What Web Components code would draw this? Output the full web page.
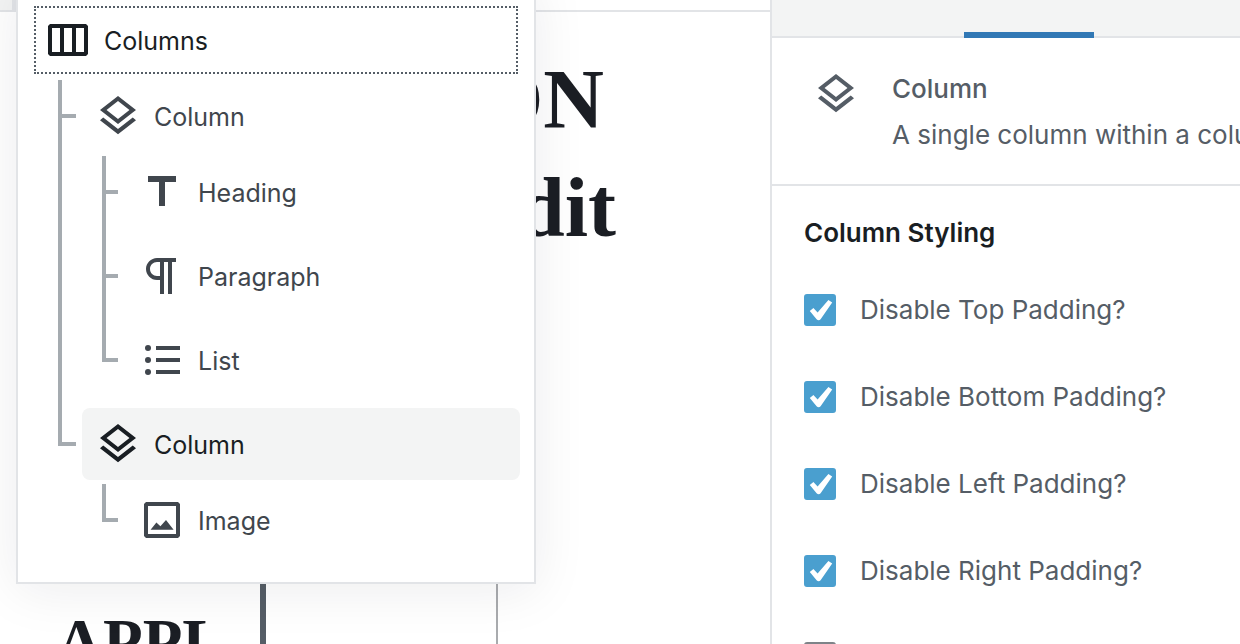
<!DOCTYPE html>
<html lang="en">
<head>
<meta charset="utf-8">
<meta name="viewport" content="width=device-width, initial-scale=1">
<title>Block navigation</title>
<style>
    :root {
        --text-dark: #191e23;
        --text-tree: #40464d;
        --text-soft: #555d66;
        --line: #e2e4e7;
        --branch: #a5abb0;
        --bg-soft: #f3f4f4;
        --accent: #3178b5;
        --check: #4a9fcf;
    }

    html,
    body {
        height: 100%;
        margin: 0;
        overflow: hidden;
    }

    body {
        background: #fff;
        color: var(--text-soft);
        font-family: Inter, Roboto, sans-serif;
        font-size: 26px;
        line-height: 32px;
    }
</style>
</head>
<body>

<editor-shell>
    <editor-canvas>
        <span slot="title">ON</span>
        <span slot="subtitle">dit</span>
        <span slot="column">APPL</span>
    </editor-canvas>

    <block-navigator slot="popover">
        <block-item root focused icon="columns">Columns
            <block-item slot="children" icon="layers">Column
                <block-item slot="children" nested icon="heading">Heading</block-item>
                <block-item slot="children" nested icon="paragraph">Paragraph</block-item>
                <block-item slot="children" nested last icon="list">List</block-item>
            </block-item>
            <block-item slot="children" last selected icon="layers">Column
                <block-item slot="children" nested last icon="image">Image</block-item>
            </block-item>
        </block-item>
    </block-navigator>

    <block-inspector slot="sidebar">
        <block-card slot="card">
            <span slot="name">Column</span>
            A single column within a columns block.
        </block-card>
        <span slot="heading">Column Styling</span>
        <check-option checked>Disable Top Padding?</check-option>
        <check-option checked>Disable Bottom Padding?</check-option>
        <check-option checked>Disable Left Padding?</check-option>
        <check-option checked>Disable Right Padding?</check-option>
        <check-option></check-option>
    </block-inspector>
</editor-shell>

<script>
const ICONS = {
    columns: '<path d="M21 4H3L2 5v14l1 1h18l1-1V5l-1-1zM8 18H4V6h4v12zm6 0h-4V6h4v12zm6 0h-4V6h4v12z"/>',
    layers: '<path d="M11.99 18.54l-7.37-5.73L3 14.07l9 7 9-7-1.63-1.27-7.38 5.74zM12 16l7.36-5.73L21 9l-9-7-9 7 1.63 1.27L12 16zm0-11.47L17.74 9 12 13.47 6.26 9 12 4.53z"/>',
    heading: '<path d="M5 4v3h5.5v12h3V7H19V4z"/>',
    paragraph: '<path d="M11 5v7H9.5C7.6 12 6 10.4 6 8.5S7.6 5 9.5 5H11m8-2H9.5C6.5 3 4 5.5 4 8.5S6.5 14 9.5 14H11v7h2V5h2v16h2V5h2V3z"/>',
    list: '<path d="M9 5h12v2H9zM9 11h12v2H9zM9 17h12v2H9z"/><circle cx="5" cy="6" r="1.5"/><circle cx="5" cy="12" r="1.5"/><circle cx="5" cy="18" r="1.5"/>',
    image: '<path d="M20 3H4L3 4v16l1 1h16l1-1V4l-1-1zm-1 16H5V5h14v14z"/><path d="M6.3 16.9l2.9-3.7 2 1.9L14 12l3.8 4.9z"/>'
};

function define(name, css, html, setup) {
    customElements.define(name, class extends HTMLElement {
        constructor() {
            super();
            this.attachShadow({ mode: 'open' });
        }

        connectedCallback() {
            this.shadowRoot.innerHTML = `<style>${css}</style>${html}`;
            if (setup) setup(this, this.shadowRoot);
        }
    });
}

define('block-icon', `
    :host {
        display: block;
        flex: none;
        width: 48px;
        height: 48px;
    }

    svg {
        display: block;
        width: 100%;
        height: 100%;
        fill: currentColor;
    }
`, '<svg viewBox="0 0 24 24" aria-hidden="true"></svg>', (host, root) => {
    root.querySelector('svg').innerHTML = ICONS[host.getAttribute('name')] || '';
});

define('editor-shell', `
    :host {
        display: grid;
        grid-template-columns: minmax(0, 1fr) 470px;
        grid-template-rows: 100%;
        height: 100%;
    }

    main {
        position: relative;
        min-width: 0;
    }

    /* The navigator floats over the canvas */
    .popover {
        position: absolute;
        top: -20px;
        left: 16px;
        width: 520px;
    }
`, `
    <main>
        <slot></slot>
        <div class="popover"><slot name="popover"></slot></div>
    </main>
    <slot name="sidebar"></slot>
`);

define('editor-canvas', `
    :host {
        display: flex;
        flex-direction: column;
        height: 100%;
        overflow: hidden;
        color: #1b1e24;
        font-family: "Liberation Serif", serif;
        font-weight: 700;
    }

    .toolbar {
        display: flex;
        flex: none;
        height: 10px;
        border-bottom: 2px solid var(--line);
    }

    .toolbar div {
        width: 12px;
        background: var(--bg-soft);
        border-right: 4px solid var(--line);
    }

    h1 {
        flex: none;
        margin: 0;
        padding: 34px 0 0 478px;
        font-size: 84px;
        line-height: 108px;
    }

    .second {
        display: block;
        padding-left: 40px;
    }

    .columns {
        display: flex;
        flex: 1;
        min-height: 0;
        margin-top: 280px;
    }

    .columns > div {
        width: 230px;
        border-right: 2px solid #a9abae;
    }

    .columns > .first {
        width: 204px;
        padding-left: 56px;
        border-right: 6px solid var(--text-soft);
    }

    h2 {
        margin: 0;
        padding-top: 60px;
        font-size: 65px;
        line-height: 80px;
    }
`, `
    <div class="toolbar"><div></div></div>
    <h1><slot name="title"></slot><span class="second"><slot name="subtitle"></slot></span></h1>
    <div class="columns">
        <div class="first"><h2><slot name="column"></slot></h2></div>
        <div></div>
    </div>
`);

define('block-navigator', `
    :host {
        display: block;
        padding: 22px 14px 26px;
        background: #fff;
        border: 2px solid var(--line);
        box-shadow: 0 6px 50px rgba(25, 30, 35, 0.08);
    }
`, '<nav aria-label="Block navigation"><slot></slot></nav>');

define('block-item', `
    :host {
        --indent: 26px;
        --tick: 14px;
        --tick-gap: 6px;
        display: flex;
    }

    :host([nested]) {
        --indent: 20px;
        --tick: 12px;
        --tick-gap: 8px;
    }

    .branch {
        display: flex;
        flex: none;
        margin: 0 var(--tick-gap) 0 var(--indent);
    }

    .stem {
        width: 4px;
        background: var(--branch);
    }

    .tick {
        width: var(--tick);
        height: 4px;
        margin-top: 34px;
        background: var(--branch);
    }

    .body {
        flex: 1;
        min-width: 0;
        padding-bottom: 12px;
    }

    .children {
        margin-top: 4px;
    }

    :host([last]) .stem {
        height: 38px;
    }

    :host([last]) .body,
    :host([root]) .body {
        padding-bottom: 0;
    }

    :host([root]) .branch,
    .children.empty {
        display: none;
    }

    button {
        display: flex;
        align-items: center;
        gap: 12px;
        width: 100%;
        height: 72px;
        padding: 0 12px;
        border: 0;
        border-radius: 8px;
        background: none;
        color: var(--text-tree);
        font: inherit;
        font-size: 25px;
        text-align: left;
    }

    button span {
        padding-top: 2px;
    }

    :host([selected]) button {
        background: var(--bg-soft);
        color: var(--text-dark);
    }

    :host([focused]) button {
        border-radius: 0;
        color: var(--text-dark);
        outline: 2px dotted var(--text-soft);
        outline-offset: -4px;
    }
`, `
    <div class="branch"><div class="stem"></div><div class="tick"></div></div>
    <div class="body">
        <button type="button"><span><slot></slot></span></button>
        <div class="children"><slot name="children"></slot></div>
    </div>
`, (host, root) => {
    const icon = document.createElement('block-icon');
    icon.setAttribute('name', host.getAttribute('icon'));
    root.querySelector('button').prepend(icon);
    root.querySelector('.children').classList.toggle('empty', !host.querySelector('[slot="children"]'));
});

define('block-inspector', `
    :host {
        display: block;
        min-width: 0;
        overflow: hidden;
        background: #fff;
        border-left: 2px solid var(--line);
    }

    .tabs {
        display: flex;
        height: 36px;
        background: var(--bg-soft);
        border-bottom: 2px solid var(--line);
    }

    .tabs button {
        box-sizing: border-box;
        width: 192px;
        height: 38px;
        padding: 0;
        border: 0;
        background: none;
    }

    .tabs .active {
        width: 130px;
        border-bottom: 6px solid var(--accent);
    }

    section {
        padding: 31px 32px;
    }

    h2 {
        margin: 0 0 45px;
        color: var(--text-dark);
        font-size: 26px;
        font-weight: 600;
        line-height: 32px;
    }

    .options {
        display: flex;
        flex-direction: column;
        gap: 55px;
    }
`, `
    <div class="tabs" role="tablist">
        <button type="button" role="tab" aria-label="Document"></button>
        <button type="button" role="tab" aria-label="Block" aria-selected="true" class="active"></button>
    </div>
    <slot name="card"></slot>
    <section>
        <h2><slot name="heading"></slot></h2>
        <div class="options"><slot></slot></div>
    </section>
`);

define('block-card', `
    :host {
        display: flex;
        gap: 32px;
        padding: 32px 0 33px 40px;
        border-bottom: 2px solid var(--line);
        white-space: nowrap;
    }

    h3 {
        margin: 3px 0 14px;
        font-size: 26px;
        font-weight: 500;
        line-height: 32px;
    }

    p {
        margin: 0;
    }
`, `
    <block-icon name="layers"></block-icon>
    <div>
        <h3><slot name="name"></slot></h3>
        <p><slot></slot></p>
    </div>
`);

define('check-option', `
    :host {
        display: block;
    }

    label {
        display: flex;
        align-items: center;
        gap: 24px;
    }

    .box {
        display: grid;
        flex: none;
        width: 32px;
        height: 32px;
    }

    .box > * {
        grid-area: 1 / 1;
    }

    input {
        appearance: none;
        box-sizing: border-box;
        width: 32px;
        height: 32px;
        margin: 0;
        border: 2px solid #7e8388;
        border-radius: 3px;
        background: #fff;
    }

    input:checked {
        border-color: var(--check);
        background: var(--check);
    }

    svg {
        display: none;
        fill: #fff;
        pointer-events: none;
    }

    input:checked + svg {
        display: block;
    }
`, `
    <label>
        <span class="box">
            <input type="checkbox">
            <svg viewBox="0 0 32 32" aria-hidden="true"><path d="M5.8 17l3.6-3 4.2 4.4L24.4 6l3.8 2.4-11.6 16.8q-2 2.2-4 0z"/></svg>
        </span>
        <span><slot></slot></span>
    </label>
`, (host, root) => {
    root.querySelector('input').checked = host.hasAttribute('checked');
});
</script>
</body>
</html>
